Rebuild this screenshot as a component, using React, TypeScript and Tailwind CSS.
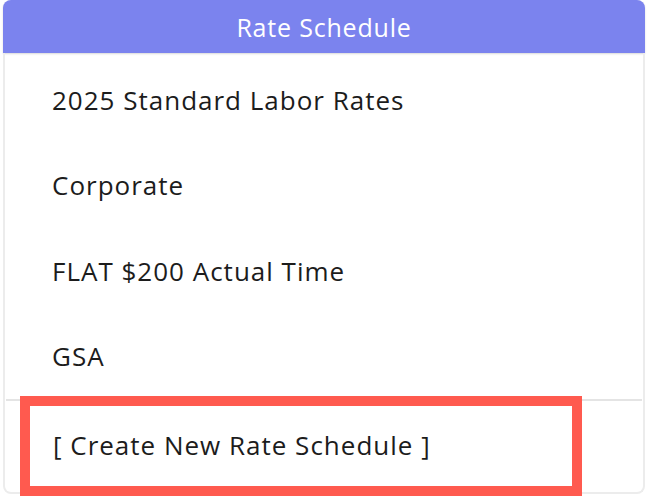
const schedules = [
  "2025 Standard Labor Rates",
  "Corporate",
  "FLAT $200 Actual Time",
  "GSA",
];

export default function App() {
  return (
    <div
      className="w-[648px] h-[496px] bg-white overflow-hidden px-[3px]"
      style={{ fontFamily: '"Open Sans", "Noto Sans", sans-serif' }}
    >
      {/* HEADER */}
      <div className="h-[53px] pt-[2px] rounded-t-[8px] bg-[#7b83ee] flex items-center justify-center text-white text-[25px] tracking-[0.8px] font-medium shadow-[0_1px_2px_rgba(0,0,0,0.15)]">
        Rate Schedule
      </div>

      {/* LIST */}
      <div className="h-[441px] border-x-2 border-b-2 border-[#ececec] rounded-b-[8px] flex flex-col">
        <div className="pt-[5px]">
          {schedules.map((name) => (
            <div
              key={name}
              className="h-[85.25px] flex items-center pl-[47px] text-[26px] tracking-[1px] text-[#1c1c1c]"
            >
              {name}
            </div>
          ))}
        </div>

        <div className="h-[2px] bg-[#e4e4e4] mx-[1px]" />

        <div className="relative flex-1 flex items-center pl-[48px] pb-[2px] text-[26px] tracking-[1px] text-[#1c1c1c]">
          [ Create New Rate Schedule ]
          <div className="absolute left-[15px] top-[-5px] w-[562px] h-[100px] border-[10px] border-[#ff5a4f]" />
        </div>
      </div>
    </div>
  );
}
